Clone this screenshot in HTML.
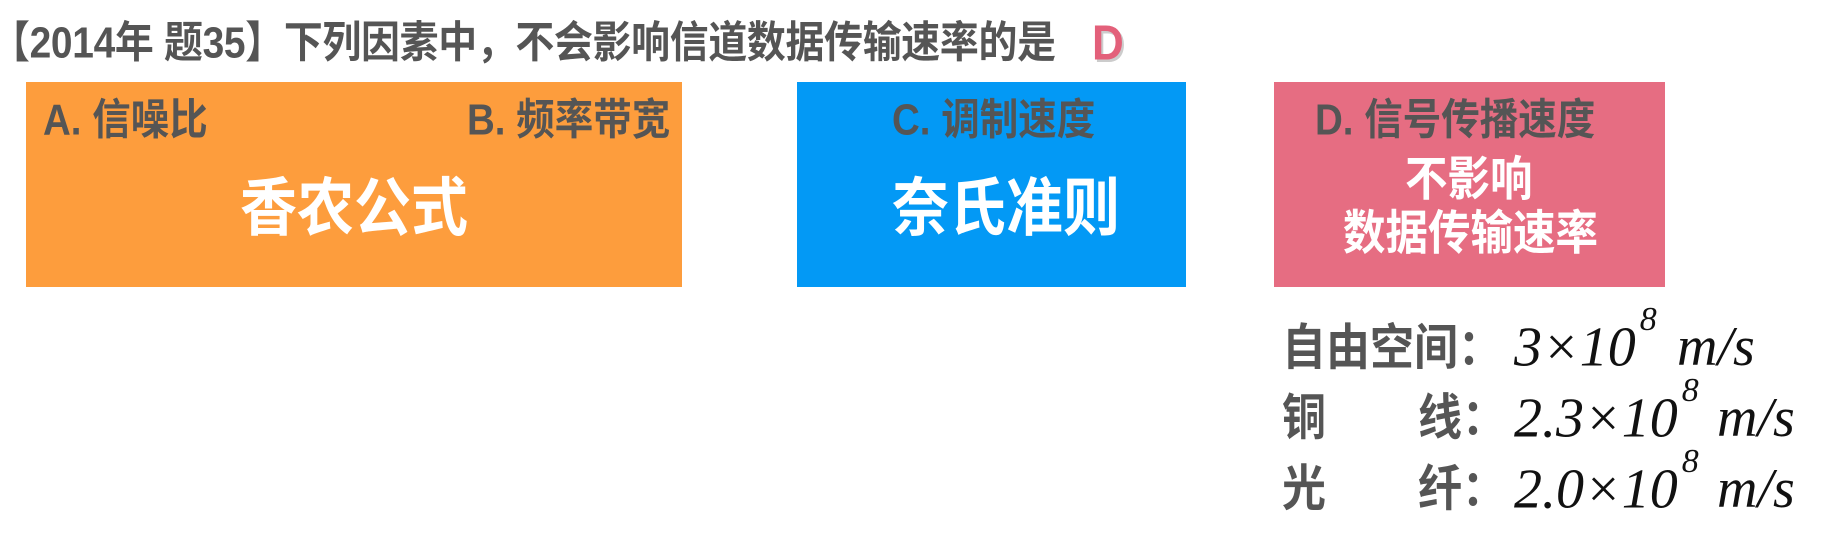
<!DOCTYPE html>
<html><head><meta charset="utf-8"><style>
html,body{margin:0;padding:0;background:#fff;width:1836px;height:548px;overflow:hidden;position:relative}
.t{position:absolute;white-space:nowrap;line-height:1;font-family:"Liberation Sans","Noto Sans CJK SC",sans-serif;font-weight:bold;transform-origin:left center;transform:scaleY(1.12)}
.g{color:#555}
.w{color:#fff}
.box{position:absolute;top:82px;height:205px}
.m{position:absolute;white-space:nowrap;line-height:1;font-family:"Liberation Serif",serif;font-style:italic;color:#111;font-size:56px}
.m sup{font-size:34px;position:relative;top:-16px;margin-left:4px;margin-right:14px}
</style></head><body>
<div class="t g" style="left:-9px;top:25px;font-size:38.9px;letter-spacing:-0.3px">【2014年 题35】下列因素中，不会影响信道数据传输速率的是</div>
<div class="t" style="left:1092px;top:22px;font-size:44px;color:#e3607a;text-shadow:2px 2px 0 #ccc">D</div>

<div class="box" style="left:26px;width:656px;background:#fd9d3d"></div>
<div class="box" style="left:797px;width:389px;background:#0399f5"></div>
<div class="box" style="left:1274px;width:391px;background:#e66d82"></div>

<div class="t g" style="left:43px;top:102px;font-size:38.5px">A. 信噪比</div>
<div class="t g" style="left:467px;top:102px;font-size:38.5px">B. 频率带宽</div>
<div class="t w" style="left:240px;top:181px;font-size:57px">香农公式</div>

<div class="t g" style="left:892px;top:102px;font-size:38.5px">C. 调制速度</div>
<div class="t w" style="left:892px;top:181px;font-size:57px">奈氏准则</div>

<div class="t g" style="left:1315px;top:102px;font-size:38.5px">D. 信号传播速度</div>
<div class="t w" style="left:1405px;top:160px;font-size:42.5px">不影响</div>
<div class="t w" style="left:1343px;top:214px;font-size:42.5px">数据传输速率</div>

<div class="t g" style="left:1282px;top:327px;font-size:44px">自由空间：</div>
<div class="t g" style="left:1282px;top:397px;font-size:44px">铜</div>
<div class="t g" style="left:1418px;top:397px;font-size:44px">线：</div>
<div class="t g" style="left:1282px;top:468px;font-size:44px">光</div>
<div class="t g" style="left:1418px;top:468px;font-size:44px">纤：</div>

<div class="m" style="left:1514px;top:319px">3×10<sup>8</sup></div>
<div class="m" style="left:1677px;top:319px">m/s</div>
<div class="m" style="left:1514px;top:390px">2.3×10<sup>8</sup></div>
<div class="m" style="left:1717px;top:390px">m/s</div>
<div class="m" style="left:1514px;top:461px">2.0×10<sup>8</sup></div>
<div class="m" style="left:1717px;top:461px">m/s</div>
</body></html>
